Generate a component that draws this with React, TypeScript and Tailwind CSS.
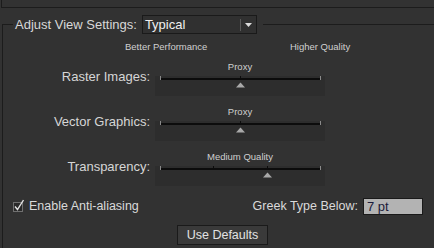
import React from "react";

const font = { fontFamily: '"Liberation Sans", Arial, sans-serif' };

/* slider track: ticks + thumb, drawn */
function Track({ ticks, thumb }: { ticks: number[]; thumb: number }) {
  return (
    <svg width="170" height="20" className="block">
      <rect x="5" y="2" width="161" height="2" fill="#0c0c0c" />
      {ticks.map((t) => (
        <rect key={t} x={t} y="0" width="1" height="4" fill={t === 5 || t === 165 ? "#8a8a8a" : "#0c0c0c"} />
      ))}
      <polygon points={`${thumb - 4},11.5 ${thumb + 0.5},6.5 ${thumb + 5},11.5`} fill="#a9a9a9" />
    </svg>
  );
}

function SliderRow({ label, caption, ticks, thumb }: { label: string; caption: string; ticks: number[]; thumb: number }) {
  return (
    <div className="flex h-[45px] items-start">
      <div className="w-[147px] mt-[8px] h-[16px] leading-[16px] text-right text-[13px] text-[#d6d6d6]">{label}</div>
      <div className="ml-[5px] w-[170px]">
        <div className="h-[12px] leading-[12px] text-center text-[9.5px] text-[#cfcfcf]">{caption}</div>
        <div className="mt-[3px] h-[20px] bg-[#2d2d2d]">
          <Track ticks={ticks} thumb={thumb} />
        </div>
      </div>
    </div>
  );
}

export default function App() {
  return (
    <div className="w-[434px] h-[248px] overflow-hidden bg-[#323232]" style={font}>

      {/* bottom of previous group */}
      <div className="ml-px h-[8px] border-l border-b border-[#1c1c1c]" />

      <fieldset className="ml-[2px] mt-[7px] h-[233px] border-l border-t border-[#1c1c1c]">
        <legend className="ml-[10px] pl-[2px] pr-[6px]">
          <div className="flex items-center">
            <span className="text-[13px] leading-[19px] text-[#d8d8d8]">Adjust View Settings:</span>
            <div className="ml-[5px] w-[115px] h-[19px] flex items-center border border-[#1a1a1a] bg-[#303030]">
              <span className="pl-[2px] text-[13px] text-[#f0f0f0] flex-1">Typical</span>
              <div className="w-px h-[12px] bg-[#5a5a5a]" />
              <svg width="15" height="19" className="block">
                <polygon points="4,8 11,8 7.5,12" fill="#dcdcdc" />
              </svg>
            </div>
          </div>
        </legend>

        <div className="mt-[7px] h-[12px] leading-[12px] flex text-[9.5px] text-[#d0d0d0]">
          <span className="ml-[122px] w-[165px]">Better Performance</span>
          <span>Higher Quality</span>
        </div>

        <div className="mt-[8px]">
          <SliderRow label="Raster Images:" caption="Proxy" ticks={[5, 85, 165]} thumb={85} />
          <SliderRow label="Vector Graphics:" caption="Proxy" ticks={[5, 85, 165]} thumb={85} />
          <SliderRow label="Transparency:" caption="Medium Quality" ticks={[5, 58, 112, 165]} thumb={112} />
        </div>

        {/* options */}
        <div className="flex items-center h-[20px] text-[12.5px] text-[#dadada]">
          <svg width="14" height="14" className="ml-[10px] block">
            <rect x="0.5" y="3.5" width="9" height="9" fill="#2a2a2a" stroke="#707070" />
            <path d="M2 7.5 L4.5 10.5 L10.5 1" fill="none" stroke="#e2e2e2" strokeWidth="1.4" />
          </svg>
          <span className="ml-[2px]">Enable Anti-aliasing</span>
          <span className="ml-auto">Greek Type Below:</span>
          <div className="ml-[5px] mr-[11px] w-[60px] h-[17px] border border-[#1a1a1a] bg-[#b3b3b3] pl-[3px] leading-[15px] text-[13px] text-[#1b1b3a]">
            7 pt
          </div>
        </div>

        <div className="mt-[6px] pl-[174px]">
          <button className="w-[91px] h-[20px] border border-[#1a1a1a] bg-[#3a3a3a] text-[12.5px] text-[#e2e2e2] leading-[18px]">
            Use Defaults
          </button>
        </div>
      </fieldset>
    </div>
  );
}
